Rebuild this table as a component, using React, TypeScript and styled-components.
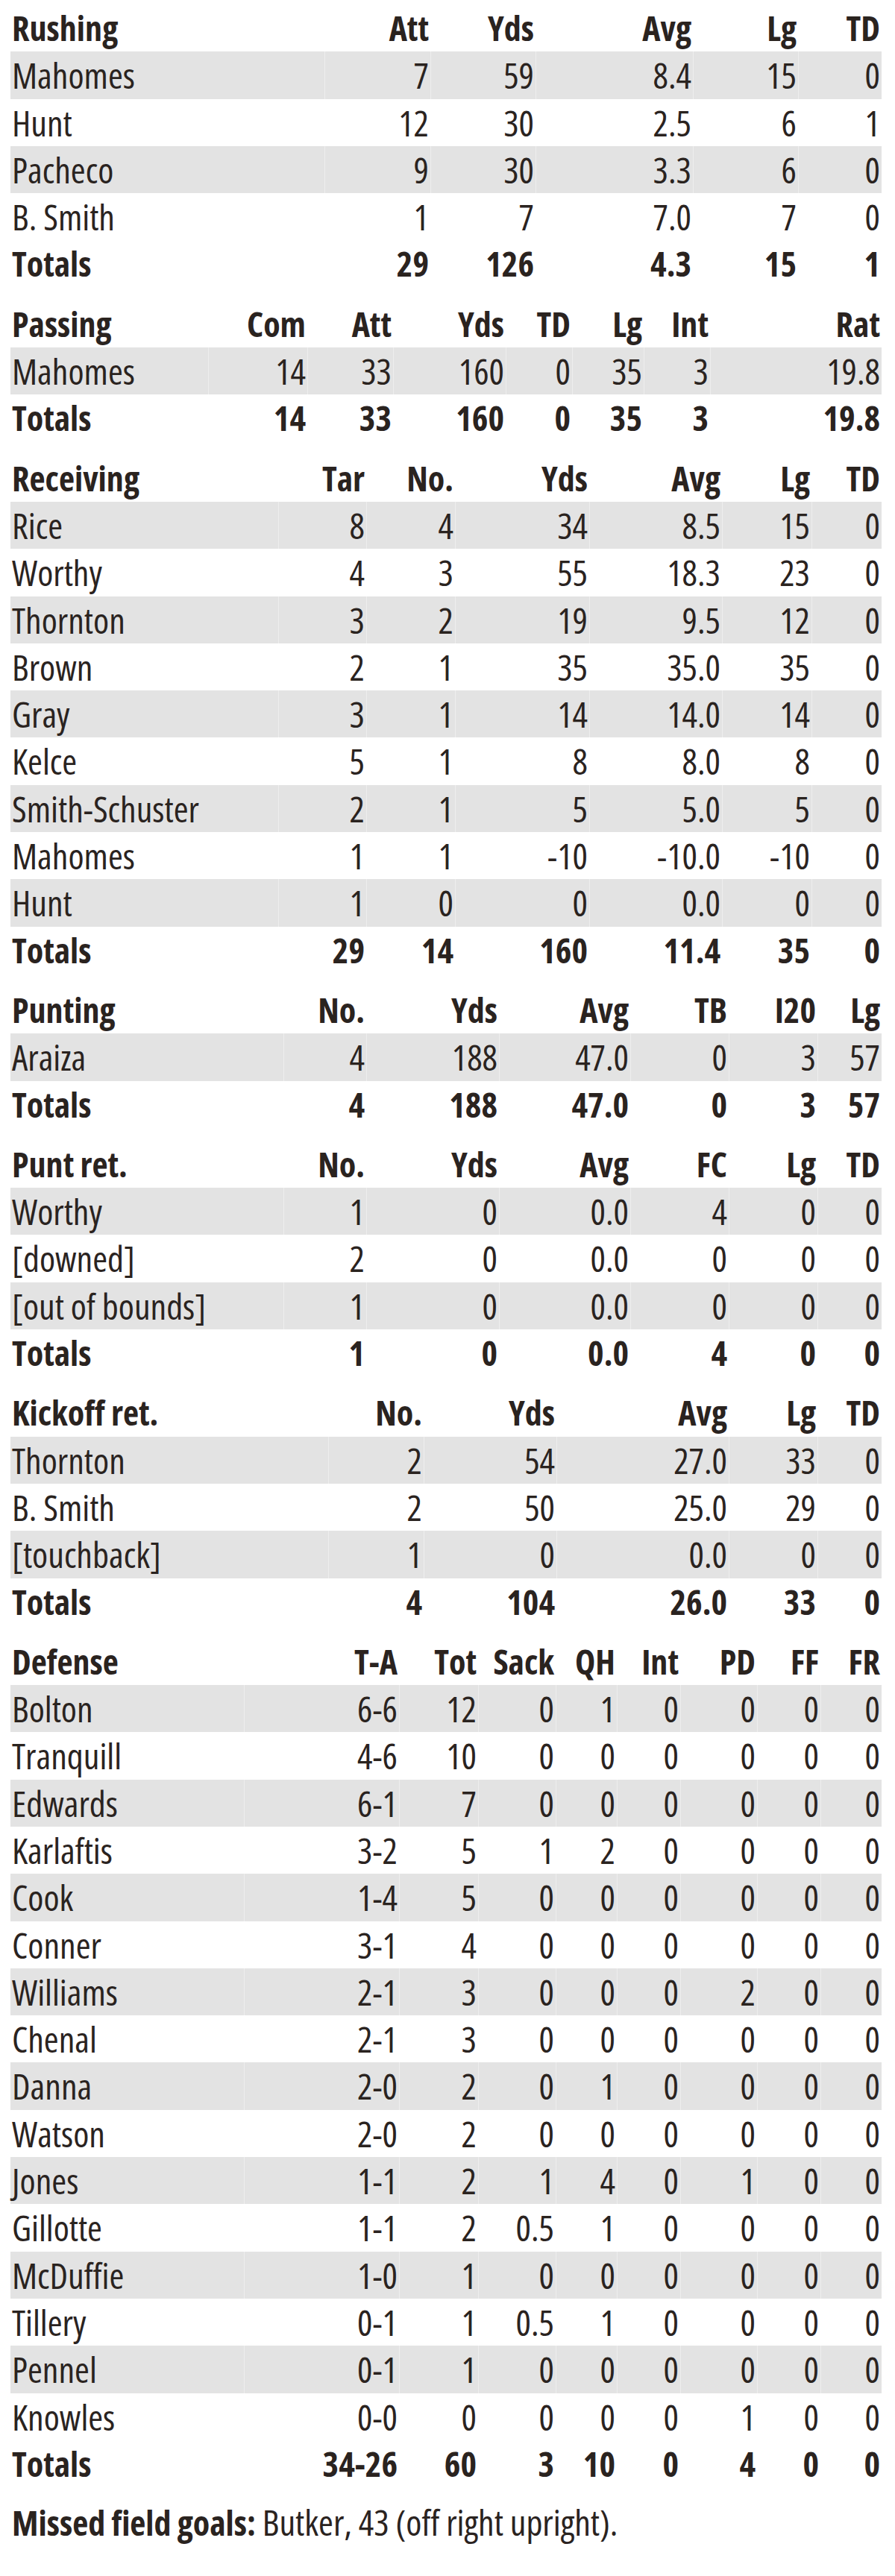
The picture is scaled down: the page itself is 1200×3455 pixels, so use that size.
import React from "react";
import styled, { createGlobalStyle } from "styled-components";

const GlobalStyle = createGlobalStyle`
  html, body {
    margin: 0;
    padding: 0;
    background: #ffffff;
  }
`;

const Page = styled.main`
  padding: 6px 18px 40px 14px;
  font-family: "Open Sans", "DejaVu Sans", sans-serif;
  font-stretch: 78%;
  font-size: 48px;
  color: #2a231f;
`;

const Section = styled.section`
  & + & {
    margin-top: 17px;
  }
`;

const Row = styled.div<{ $cols: string; $shaded?: boolean; $bold?: boolean }>`
  display: grid;
  grid-template-columns: ${(p) => p.$cols};
  height: 63.3px;
  background: ${(p) => (p.$shaded ? "#e3e3e3" : "transparent")};
  font-weight: ${(p) => (p.$bold ? 700 : 400)};
  font-size: ${(p) => (p.$bold ? "46px" : "48px")};
  font-stretch: ${(p) => (p.$bold ? "75%" : "78%")};
`;

const Cell = styled.div`
  line-height: 63px;
  padding: 0 2px;
  text-align: right;
  white-space: nowrap;
  & + & {
    border-left: 1px solid rgba(255, 255, 255, 0.4);
  }
`;

const NameCell = styled(Cell)`
  text-align: left;
`;

const Note = styled.p`
  margin: 15px 0 0 0;
  line-height: 63px;
  padding: 0 2px;
  white-space: nowrap;
`;

const Strong = styled.span`
  font-weight: 700;
  font-size: 46px;
  font-stretch: 75%;
`;

type TableData = {
  title: string;
  cols: string;
  headers: string[];
  rows: (string | number)[][];
  totals: (string | number)[];
};

const tables: TableData[] = [
  {
    title: "Rushing",
    cols: "421px 142px 141px 211px 141px 112px",
    headers: ["Att", "Yds", "Avg", "Lg", "TD"],
    rows: [
      ["Mahomes", 7, 59, "8.4", 15, 0],
      ["Hunt", 12, 30, "2.5", 6, 1],
      ["Pacheco", 9, 30, "3.3", 6, 0],
      ["B. Smith", 1, 7, "7.0", 7, 0],
    ],
    totals: ["Totals", 29, 126, "4.3", 15, 1],
  },
  {
    title: "Passing",
    cols: "265px 133px 115px 151px 89px 96px 89px 230px",
    headers: ["Com", "Att", "Yds", "TD", "Lg", "Int", "Rat"],
    rows: [["Mahomes", 14, 33, 160, 0, 35, 3, "19.8"]],
    totals: ["Totals", 14, 33, 160, 0, 35, 3, "19.8"],
  },
  {
    title: "Receiving",
    cols: "359px 118px 119px 180px 178px 120px 94px",
    headers: ["Tar", "No.", "Yds", "Avg", "Lg", "TD"],
    rows: [
      ["Rice", 8, 4, 34, "8.5", 15, 0],
      ["Worthy", 4, 3, 55, "18.3", 23, 0],
      ["Thornton", 3, 2, 19, "9.5", 12, 0],
      ["Brown", 2, 1, 35, "35.0", 35, 0],
      ["Gray", 3, 1, 14, "14.0", 14, 0],
      ["Kelce", 5, 1, 8, "8.0", 8, 0],
      ["Smith-Schuster", 2, 1, 5, "5.0", 5, 0],
      ["Mahomes", 1, 1, -10, "-10.0", -10, 0],
      ["Hunt", 1, 0, 0, "0.0", 0, 0],
    ],
    totals: ["Totals", 29, 14, 160, "11.4", 35, 0],
  },
  {
    title: "Punting",
    cols: "366px 111px 178px 176px 132px 119px 86px",
    headers: ["No.", "Yds", "Avg", "TB", "I20", "Lg"],
    rows: [["Araiza", 4, 188, "47.0", 0, 3, 57]],
    totals: ["Totals", 4, 188, "47.0", 0, 3, 57],
  },
  {
    title: "Punt ret.",
    cols: "366px 111px 178px 176px 132px 119px 86px",
    headers: ["No.", "Yds", "Avg", "FC", "Lg", "TD"],
    rows: [
      ["Worthy", 1, 0, "0.0", 4, 0, 0],
      ["[downed]", 2, 0, "0.0", 0, 0, 0],
      ["[out of bounds]", 1, 0, "0.0", 0, 0, 0],
    ],
    totals: ["Totals", 1, 0, "0.0", 4, 0, 0],
  },
  {
    title: "Kickoff ret.",
    cols: "426px 128px 178px 231px 119px 86px",
    headers: ["No.", "Yds", "Avg", "Lg", "TD"],
    rows: [
      ["Thornton", 2, 54, "27.0", 33, 0],
      ["B. Smith", 2, 50, "25.0", 29, 0],
      ["[touchback]", 1, 0, "0.0", 0, 0],
    ],
    totals: ["Totals", 4, 104, "26.0", 33, 0],
  },
  {
    title: "Defense",
    cols: "313px 208px 106px 104px 82px 85px 103px 85px 82px",
    headers: ["T-A", "Tot", "Sack", "QH", "Int", "PD", "FF", "FR"],
    rows: [
      ["Bolton", "6-6", 12, 0, 1, 0, 0, 0, 0],
      ["Tranquill", "4-6", 10, 0, 0, 0, 0, 0, 0],
      ["Edwards", "6-1", 7, 0, 0, 0, 0, 0, 0],
      ["Karlaftis", "3-2", 5, 1, 2, 0, 0, 0, 0],
      ["Cook", "1-4", 5, 0, 0, 0, 0, 0, 0],
      ["Conner", "3-1", 4, 0, 0, 0, 0, 0, 0],
      ["Williams", "2-1", 3, 0, 0, 0, 2, 0, 0],
      ["Chenal", "2-1", 3, 0, 0, 0, 0, 0, 0],
      ["Danna", "2-0", 2, 0, 1, 0, 0, 0, 0],
      ["Watson", "2-0", 2, 0, 0, 0, 0, 0, 0],
      ["Jones", "1-1", 2, 1, 4, 0, 1, 0, 0],
      ["Gillotte", "1-1", 2, "0.5", 1, 0, 0, 0, 0],
      ["McDuffie", "1-0", 1, 0, 0, 0, 0, 0, 0],
      ["Tillery", "0-1", 1, "0.5", 1, 0, 0, 0, 0],
      ["Pennel", "0-1", 1, 0, 0, 0, 0, 0, 0],
      ["Knowles", "0-0", 0, 0, 0, 0, 1, 0, 0],
    ],
    totals: ["Totals", "34-26", 60, 3, 10, 0, 4, 0, 0],
  },
];

function StatRow({
  cols,
  values,
  shaded,
  bold,
}: {
  cols: string;
  values: (string | number)[];
  shaded?: boolean;
  bold?: boolean;
}) {
  const [name, ...rest] = values;
  return (
    <Row $cols={cols} $shaded={shaded} $bold={bold}>
      <NameCell>{name}</NameCell>
      {rest.map((v, i) => (
        <Cell key={i}>{v}</Cell>
      ))}
    </Row>
  );
}

function StatTable({ data }: { data: TableData }) {
  return (
    <Section>
      <StatRow cols={data.cols} values={[data.title, ...data.headers]} bold />
      {data.rows.map((r, i) => (
        <StatRow key={i} cols={data.cols} values={r} shaded={i % 2 === 0} />
      ))}
      <StatRow cols={data.cols} values={data.totals} bold />
    </Section>
  );
}

export default function App() {
  return (
    <>
      <GlobalStyle />
      <Page>
        {tables.map((t) => (
          <StatTable key={t.title} data={t} />
        ))}
        <Note>
          <Strong>Missed field goals:</Strong> Butker, 43 (off right upright).
        </Note>
      </Page>
    </>
  );
}
